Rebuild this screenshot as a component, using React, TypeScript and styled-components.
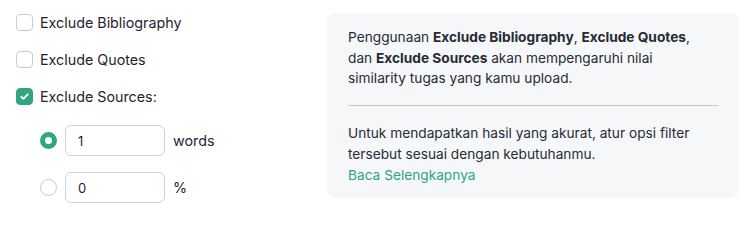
import React, { FC, useState } from 'react';
import styled, { createGlobalStyle } from 'styled-components';

const GlobalStyle = createGlobalStyle`
  body {
    margin: 0;
    background: #ffffff;
    font-family: 'Inter', 'Noto Sans', sans-serif;
    color: #1f2430;
  }
`;

const GREEN = '#2fa67f';

const Page = styled.div`
  display: flex;
  align-items: flex-start;
  width: 752px;
  height: 211px;
`;

const Options = styled.div`
  display: flex;
  flex-direction: column;
  width: 327px;
  flex-shrink: 0;
  padding: 4px 0 0 16px;
  box-sizing: border-box;
`;

const CheckRow = styled.label`
  display: flex;
  align-items: center;
  gap: 7px;
  height: 37px;
  font-size: 14.3px;
  cursor: pointer;
`;

const Box = styled.span<{ checked?: boolean }>`
  display: flex;
  align-items: center;
  justify-content: center;
  width: 17px;
  height: 17px;
  box-sizing: border-box;
  border-radius: 4px;
  border: 1px solid ${({ checked }) => (checked ? GREEN : '#c9cbcf')};
  background: ${({ checked }) => (checked ? GREEN : '#fff')};
`;

const SubList = styled.div`
  display: flex;
  flex-direction: column;
  gap: 16px;
  margin: 10px 0 0 24px;
`;

const RadioRow = styled.div`
  display: flex;
  align-items: center;
`;

const Radio = styled.span<{ checked?: boolean }>`
  width: 17px;
  height: 17px;
  box-sizing: border-box;
  border-radius: 50%;
  border: ${({ checked }) => (checked ? `5px solid ${GREEN}` : '1px solid #c9cbcf')};
  background: #fff;
  margin-right: 8px;
`;

const NumberInput = styled.input`
  width: 100px;
  height: 31px;
  box-sizing: border-box;
  border: 1px solid #cdd3db;
  border-radius: 6px;
  padding: 0 12px;
  font-family: inherit;
  font-size: 13px;
  color: #1f2430;
  outline: none;
`;

const Unit = styled.span`
  margin-left: 8px;
  font-size: 14.3px;
`;

const InfoCard = styled.div`
  width: 412px;
  height: 185px;
  margin-top: 13px;
  flex-shrink: 0;
  box-sizing: border-box;
  padding: 14px 21px 0;
  background: #f6f7f9;
  border-radius: 9px;
  font-size: 13.7px;
  color: #262b36;
`;

const Para = styled.p<{ lh?: string }>`
  margin: 0;
  line-height: ${({ lh }) => lh || '20.5px'};
`;

const Divider = styled.hr`
  margin: 16px 0 17px;
  border: none;
  border-top: 1px solid #c9c9cd;
`;

const ReadMore = styled.a`
  color: ${GREEN};
  text-decoration: none;
`;

const CheckMark: FC = () => (
  <svg width="11" height="11" viewBox="0 0 12 12" fill="none">
    <path d="M2.5 6.3l2.3 2.3 4.7-5" stroke="#fff" strokeWidth="2" strokeLinecap="round" strokeLinejoin="round" />
  </svg>
);

type CheckProps = { label: string; checked?: boolean; onToggle: () => void };

const Check: FC<CheckProps> = ({ label, checked, onToggle }) => (
  <CheckRow onClick={onToggle}>
    <Box checked={checked}>{checked && <CheckMark />}</Box>
    {label}
  </CheckRow>
);

const App: FC = () => {
  const [checks, setChecks] = useState([false, false, true]);
  const [mode, setMode] = useState(0);
  const [words, setWords] = useState('1');
  const [pct, setPct] = useState('0');
  const labels = ['Exclude Bibliography', 'Exclude Quotes', 'Exclude Sources:'];

  return (
    <>
      <GlobalStyle />
      <Page>
        <Options>
          {labels.map((l, i) => (
            <Check
              key={l}
              label={l}
              checked={checks[i]}
              onToggle={() => setChecks(checks.map((c, j) => (j === i ? !c : c)))}
            />
          ))}
          <SubList>
            <RadioRow>
              <Radio checked={mode === 0} onClick={() => setMode(0)} />
              <NumberInput value={words} onChange={(e) => setWords(e.target.value)} />
              <Unit>words</Unit>
            </RadioRow>
            <RadioRow>
              <Radio checked={mode === 1} onClick={() => setMode(1)} />
              <NumberInput value={pct} onChange={(e) => setPct(e.target.value)} />
              <Unit>%</Unit>
            </RadioRow>
          </SubList>
        </Options>
        <InfoCard>
          <Para>
            Penggunaan <b>Exclude Bibliography</b>, <b>Exclude Quotes</b>,
            <br />
            dan <b>Exclude Sources</b> akan mempengaruhi nilai
            <br />
            similarity tugas yang kamu upload.
          </Para>
          <Divider />
          <Para lh="21px">
            Untuk mendapatkan hasil yang akurat, atur opsi filter
            <br />
            tersebut sesuai dengan kebutuhanmu.
            <br />
            <ReadMore href="#">Baca Selengkapnya</ReadMore>
          </Para>
        </InfoCard>
      </Page>
    </>
  );
};

export default App;
